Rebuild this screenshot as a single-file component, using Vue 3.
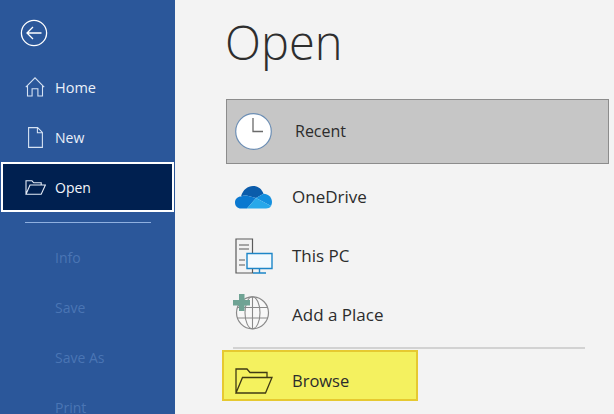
<script setup>
const disabled = ['Info', 'Save', 'Save As', 'Print']
</script>

<template>
  <div class="app">
    <aside class="side">
      <button class="back" aria-label="Back">
        <svg width="28" height="28" viewBox="0 0 28 28" fill="none" stroke="#fff" stroke-width="1.3">
          <circle cx="14" cy="14" r="12.6" />
          <path d="M21.5 14H7M13 8l-6 6 6 6" />
        </svg>
      </button>
      <div class="item">
        <span class="ico">
          <svg width="20" height="20" viewBox="0 0 20 20" fill="none" stroke="#d6e2f3" stroke-width="1.1">
            <path d="M.8 10.2 10 .9l9.2 9.3M2.5 9v10h4.600v-7.200h5.800V19h4.600V9" />
          </svg>
        </span>
        <span class="home">Home</span>
      </div>
      <div class="item">
        <span class="ico">
          <svg class="doc" width="15" height="21" viewBox="0 0 15 21" fill="none" stroke="#d6e2f3" stroke-width="1.1">
            <path d="M.6.6h9L14.400 5.400v15H.6zM9.400.8v5h5" />
          </svg>
        </span>
        <span>New</span>
      </div>
      <div class="item active">
        <span class="ico">
          <svg width="21" height="15" viewBox="0 0 21 15" fill="none" stroke="#e4ebf6" stroke-width="1.1">
            <path d="M1 14.300V.8h6l1.700 2h7.500V5M1 14.300 5 5h15.400l-4.200 9.300z" />
          </svg>
        </span>
        <span>Open</span>
      </div>
      <div class="rule"></div>
      <div v-for="d in disabled" :key="d" class="item off">
        <span class="ico"></span>
        <span>{{ d }}</span>
      </div>
    </aside>

    <main class="main">
      <h1 class="title">Open</h1>
      <div class="recent">
        <span class="place-ico">
          <svg width="37" height="37" viewBox="0 0 37 37">
            <circle cx="18.500" cy="18.500" r="17.800" fill="#fff" stroke="#6d8fb5" stroke-width="1.200" />
            <path d="M18 5v13.500h10" fill="none" stroke="#6a6a6a" stroke-width="1.300" />
          </svg>
        </span>
        <span class="recent-label">Recent</span>
      </div>
      <div class="place">
        <span class="place-ico">
          <svg width="37" height="24" viewBox="0 0 37 24">
            <path d="M6 11.500C8 4.500 12.800 1 18 1c5 0 8.800 2.800 10.500 7.800L21 13l-8.500-2.200C10.500 10.300 8 10.500 6 11.500z" fill="#0b5cab" />
            <path d="M6 11.500c2-1 4.500-1.200 6.500-.7L21 13l-9 10.500H6c-3.500 0-6-2.500-6-6 0-3.500 2.800-6 6-6z" fill="#0a78d0" />
            <path d="M28.500 8.800C33.500 9 37 12.800 37 17c0 1.500-.4 2.800-1 4L21 13z" fill="#1490df" />
            <path d="M21 13l15 8c-1 1.800-3 2.500-5 2.500H12z" fill="#28a8ea" />
          </svg>
        </span>
        <span>OneDrive</span>
      </div>
      <div class="place">
        <span class="place-ico">
          <svg width="38" height="36" viewBox="0 0 38 36" fill="none">
            <path d="M1 1h16.500v34H1z" stroke="#5a5a5a" stroke-width="1.200" />
            <path d="M4 7h10M4 11h10M4 22h6M4 27h6" stroke="#5a5a5a" stroke-width="1.100" />
            <path d="M12 15.500h25v15H12z" fill="#f3fafe" stroke="#1d86c8" stroke-width="1.400" />
            <path d="M24.500 30.500v4.500M18 35h13" stroke="#1d86c8" stroke-width="1.400" />
          </svg>
        </span>
        <span>This PC</span>
      </div>
      <div class="place">
        <span class="place-ico globe">
          <svg width="37" height="36" viewBox="0 0 37 36" fill="none">
            <circle cx="19.500" cy="18.800" r="16" fill="#f8f8f8" stroke="#8a8a8a" stroke-width="1.200" />
            <ellipse cx="19.500" cy="18.800" rx="7.500" ry="16" stroke="#8a8a8a" stroke-width="1.100" />
            <path d="M4 13.500h31M4 24h31M19.500 3v32" stroke="#8a8a8a" stroke-width="1.100" />
            <path d="M6 0h5.500v6H17v5.500h-5.500V17H6v-5.500H0V6h6z" fill="#6fa394" />
          </svg>
        </span>
        <span>Add a Place</span>
      </div>
      <div class="rule2"></div>
      <div class="browse">
        <span class="place-ico">
          <svg width="38" height="26" viewBox="0 0 38 26" fill="none" stroke="#3f3a14" stroke-width="1.300">
            <path d="M1 25V1h11l3 3.500h17V9M1 25 7.500 9.500H37L30.500 25z" fill="#f4f25e" />
          </svg>
        </span>
        <span>Browse</span>
      </div>
    </main>
  </div>
</template>

<style>
html, body { margin: 0; padding: 0; overflow: hidden; }
</style>

<style scoped>
.app {
  width: 614px;
  height: 414px;
  display: flex;
  overflow: hidden;
  background: #f3f3f3;
  font-family: "Open Sans", "Noto Sans", "Liberation Sans", sans-serif;
  color: #2c2c2c;
}
.side {
  width: 175px;
  flex: none;
  background: #2b579a;
  padding-top: 8px;
  box-sizing: border-box;
}
.back {
  display: flex;
  align-items: center;
  width: 100%;
  height: 50px;
  margin-bottom: 4px;
  padding: 0 0 0 20px;
  background: none;
  border: 0;
}
.item {
  display: flex;
  align-items: center;
  height: 50px;
  box-sizing: border-box;
  color: #eaf0f9;
  font-size: 14px;
  flex: none;
}
.home {
  font-size: 14.500px;
}
.ico {
  width: 55px;
  padding-left: 25px;
  box-sizing: border-box;
  flex: none;
  display: flex;
  align-items: center;
}
.doc {
  margin-left: 3px;
}
.active {
  margin: 0 1px;
  border: 2px solid #fff;
  background: #002050;
  color: #f3f6fb;
}
.active .ico {
  width: 52px;
  padding-left: 22px;
}
.off {
  color: #4a75b4;
}
.rule {
  height: 1px;
  margin: 10px 24px 9px 25px;
  background: #8fb0e0;
}
.main {
  flex: 1;
  min-width: 0;
  padding: 0 5px 0 51px;
}
.title {
  margin: 0 0 0 -1px;
  height: 99px;
  box-sizing: border-box;
  padding-top: 10px;
  font-size: 47px;
  line-height: 64px;
  font-weight: 300;
  color: #2e2e2e;
}
.recent {
  display: flex;
  align-items: center;
  height: 65px;
  box-sizing: border-box;
  padding-bottom: 1px;
  background: #c6c6c6;
  border: 1px solid #8c8c8c;
  margin-bottom: 3px;
  font-size: 16px;
}
.recent .place-ico {
  width: 68px;
  padding-left: 8px;
}
.place-ico {
  width: 66px;
  padding-left: 9px;
  box-sizing: border-box;
  flex: none;
  display: flex;
  align-items: center;
}
.globe {
  padding-left: 7px;
  padding-bottom: 6px;
}
.place {
  display: flex;
  align-items: center;
  height: 59px;
  font-size: 17px;
}
.rule2 {
  height: 2px;
  margin: 3px 24px 1px 7px;
  background: #d2d2d2;
}
.browse {
  display: flex;
  align-items: center;
  width: 196px;
  height: 51px;
  margin-left: -4px;
  padding-top: 10px;
  box-sizing: border-box;
  background: #f4f15f;
  border: 2px solid #e6c930;
  font-size: 16.500px;
}
.browse .place-ico {
  width: 68px;
  padding-left: 11px;
}
</style>
